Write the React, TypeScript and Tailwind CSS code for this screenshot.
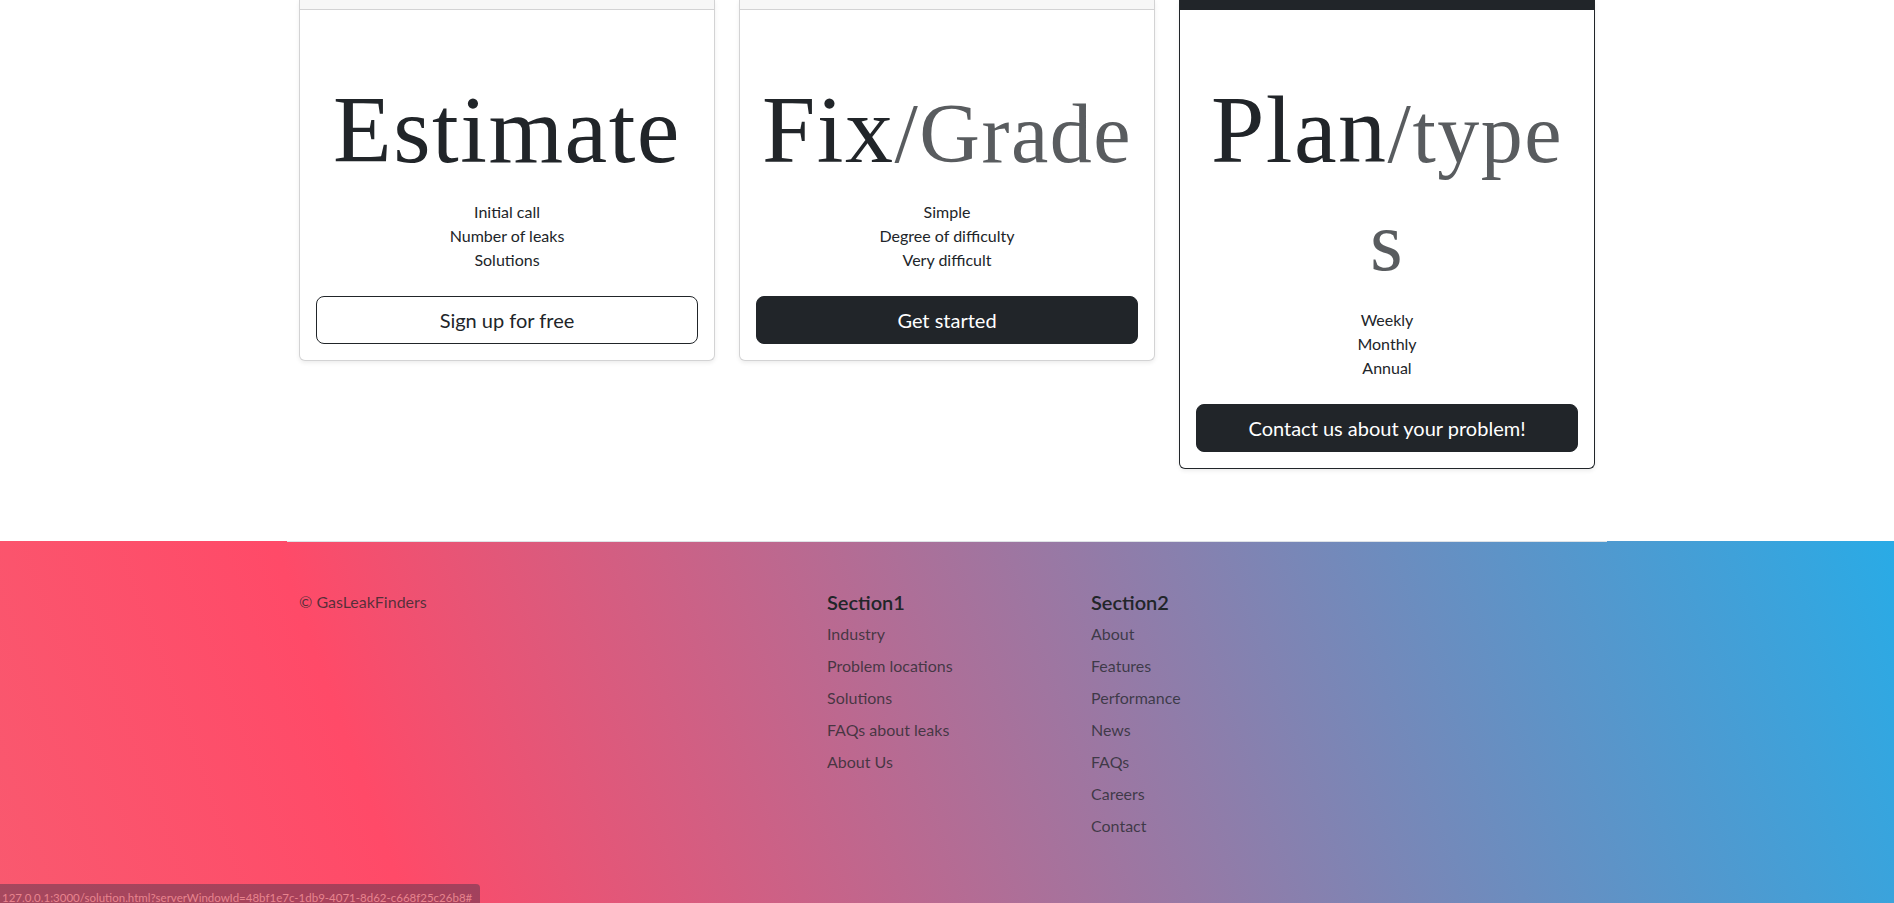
import React from "react";

type CardProps = {
  main: string;
  sub?: string;
  subBreak?: string;
  items: string[];
  button: string;
  variant: "outline" | "solid";
  featured?: boolean;
};

function PricingCard({ main, sub, subBreak, items, button, variant, featured }: CardProps) {
  return (
    <div
      className={
        "bg-white rounded-b-[6px] border-x border-b shadow-[0_2px_4px_rgba(0,0,0,0.075)] overflow-hidden " +
        (featured ? "border-[#212529]" : "border-[#d3d3d4]")
      }
    >
      <div
        className={
          "h-[10px] border-b " +
          (featured ? "bg-[#212529] border-[#212529]" : "bg-[#f7f7f7] border-[#d3d3d4]")
        }
      />
      <div className="px-4 pt-[66px] pb-4 text-center">
        <h1 className="font-['Liberation_Serif',serif] text-[96px] leading-[108px] font-normal text-[#212529] tracking-[1.5px]">
          <span className="whitespace-nowrap">
            {main}
            {sub ? (
              <small className="text-[84px] leading-none text-[#212529]/75">{sub}</small>
            ) : null}
          </span>
          {subBreak ? (
            <>
              <br />
              <small className="text-[84px] leading-none text-[#212529]/75">{subBreak}</small>
            </>
          ) : null}
        </h1>
        <ul className="mt-4 mb-6 text-[16px] leading-6 text-[#212529]">
          {items.map((it) => (
            <li key={it}>{it}</li>
          ))}
        </ul>
        <button
          type="button"
          className={
            "w-full h-12 rounded-lg border border-[#212529] text-[20px] leading-[30px] " +
            (variant === "outline" ? "bg-white text-[#212529]" : "bg-[#212529] text-white")
          }
        >
          {button}
        </button>
      </div>
    </div>
  );
}

function FooterCol({ title, links }: { title: string; links: string[] }) {
  return (
    <div>
      <h5 className="text-[20px] leading-6 font-semibold text-[#212529] mb-2">{title}</h5>
      <ul className="text-[16px] leading-6">
        {links.map((l) => (
          <li key={l} className="mb-2">
            <a href="#" className="text-[#212529]/75 no-underline">
              {l}
            </a>
          </li>
        ))}
      </ul>
    </div>
  );
}

export default function App() {
  return (
    <div className="relative h-[903px] overflow-hidden flex flex-col bg-white font-['Lato','Open_Sans',sans-serif]">
      <section className="h-[541px] shrink-0">
        <div className="w-[1320px] mx-auto px-3 grid grid-cols-3 gap-6 items-start">
          <PricingCard
            main="Estimate"
            items={["Initial call", "Number of leaks", "Solutions"]}
            button="Sign up for free"
            variant="outline"
          />
          <PricingCard
            main="Fix"
            sub="/Grade"
            items={["Simple", "Degree of difficulty", "Very difficult"]}
            button="Get started"
            variant="solid"
          />
          <PricingCard
            main="Plan"
            sub="/type"
            subBreak="s"
            items={["Weekly", "Monthly", "Annual"]}
            button="Contact us about your problem!"
            variant="solid"
            featured
          />
        </div>
      </section>
      <footer className="flex-1 bg-[linear-gradient(70deg,#f9596f_0%,#ff4a68_20%,#29abe6_100%)]">
        <div className="w-[1320px] mx-auto border-t border-[#dee2e6] pt-12 px-3 grid grid-cols-5 gap-x-6">
          <div>
            <small className="block text-[16px] leading-6 text-[#212529]/75">© GasLeakFinders</small>
          </div>
          <div />
          <FooterCol
            title="Section1"
            links={["Industry", "Problem locations", "Solutions", "FAQs about leaks", "About Us"]}
          />
          <FooterCol
            title="Section2"
            links={["About", "Features", "Performance", "News", "FAQs", "Careers", "Contact"]}
          />
          <div />
        </div>
      </footer>
      <div className="absolute left-0 bottom-0 w-[480px] h-[19px] bg-[#3e3349]/45 rounded-tr-[4px] overflow-hidden pl-[2px] pt-[6px] text-[11.5px] leading-4 text-[#e8848e] whitespace-nowrap">
        127.0.0.1:3000/solution.html?serverWindowId=48bf1e7c-1db9-4071-8d62-c668f25c26b8#
      </div>
    </div>
  );
}
